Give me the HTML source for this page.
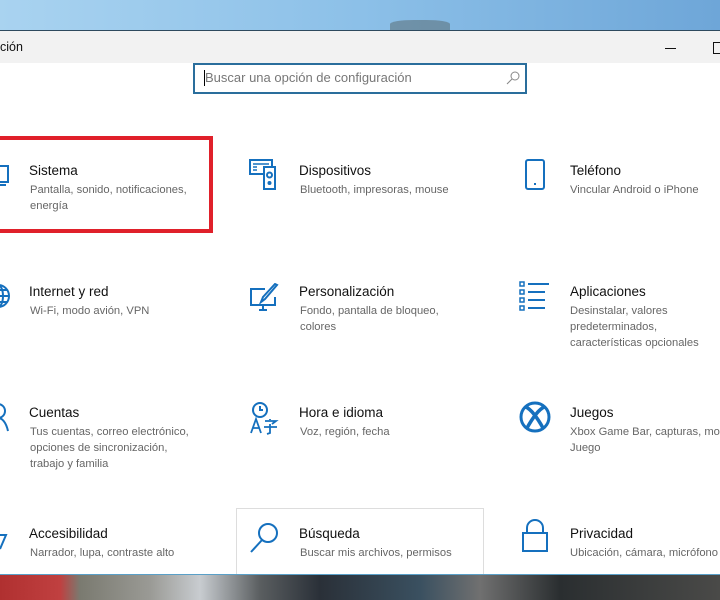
<!DOCTYPE html><html><head><meta charset="utf-8"><style>
body{margin:0;width:720px;height:600px;overflow:hidden;position:relative;font-family:"Liberation Sans",sans-serif;background:#fff}
.a{position:absolute}
.t{position:absolute;font-size:13.5px;color:#111;white-space:nowrap}
.d{position:absolute;font-size:11.2px;color:#666;line-height:16px;white-space:nowrap}
svg{position:absolute;fill:none;stroke:#1570be;stroke-width:2}
</style></head><body>
<div class="a" style="left:0;top:0;width:720px;height:30px;background:linear-gradient(90deg,#a9d3f0,#8cc0e8 50%,#6ea6d8)"></div>
<div class="a" style="left:390px;top:20px;width:60px;height:10px;background:#55656a;border-radius:40% 40% 0 0;opacity:.5"></div>
<div class="a" style="left:0;top:30px;width:720px;height:1px;background:#2e4a5e"></div>
<div class="a" style="left:0;top:31px;width:720px;height:32px;background:#f2f2f2"></div>
<div class="a" style="left:0;top:40px;font-size:12.5px;color:#111">ción</div>
<div class="a" style="left:665px;top:48px;width:11px;height:1px;background:#111"></div>
<div class="a" style="left:713px;top:42px;width:10px;height:10px;border:1px solid #111"></div>
<div class="a" style="left:193px;top:63px;width:330px;height:27px;border:2px solid #2a6e9c;background:#fff"></div>
<div class="a" style="left:204px;top:70px;width:1px;height:16px;background:#000"></div>
<div class="a" style="left:205px;top:70px;font-size:13px;color:#777">Buscar una opción de configuración</div>
<svg style="left:505px;top:70px" width="16" height="16" viewBox="0 0 16 16"><circle cx="10" cy="6" r="4" stroke="#888" stroke-width="1"/><path d="M7 9L2 14" stroke="#888" stroke-width="1"/></svg>
<div class="a" style="left:-4px;top:136px;width:209px;height:89px;border:4px solid #e0202a"></div>
<div class="a" style="left:236px;top:508px;width:246px;height:66px;border:1px solid #ddd;border-bottom:none"></div>
<div class="a" style="left:0;top:574px;width:720px;height:26px;background:linear-gradient(90deg,#b03030 0,#c04040 60px,#7a7a70 80px,#9a9a95 150px,#c8ccd0 200px,#5a5e60 260px,#2a3038 320px,#3a5060 420px,#707070 480px,#2a2e30 560px,#4a4a48 720px)"></div>
<div class="a" style="left:0;top:574px;width:720px;height:1px;background:#5aa0c8"></div>

<svg style="left:-8px;top:160px" width="22" height="30" viewBox="0 0 22 30"><rect x="2" y="6" width="14" height="16"/><path d="M0 25H14"/></svg>
<div class="t" style="left:29px;top:163px">Sistema</div>
<div class="d" style="left:30px;top:182px">Pantalla, sonido, notificaciones,<br>energía</div>

<svg style="left:249px;top:159px" width="30" height="32" viewBox="0 0 30 32"><rect x="1" y="1" width="22" height="14"/><path d="M4 5h16M4 8h4M4 11h4" stroke-width="1.5"/><rect x="15" y="8" width="11" height="22" fill="#fff"/><circle cx="20.5" cy="16" r="2.5"/><circle cx="20.5" cy="24" r="1"/></svg>
<div class="t" style="left:299px;top:163px">Dispositivos</div>
<div class="d" style="left:300px;top:182px">Bluetooth, impresoras, mouse</div>

<svg style="left:524px;top:159px" width="22" height="32" viewBox="0 0 22 32"><rect x="2" y="1" width="18" height="29" rx="2"/><path d="M10 25h2"/></svg>
<div class="t" style="left:570px;top:163px">Teléfono</div>
<div class="d" style="left:570px;top:182px">Vincular Android o iPhone</div>

<svg style="left:-10px;top:282px" width="24" height="30" viewBox="0 0 24 30"><circle cx="8" cy="14" r="11"/><ellipse cx="8" cy="14" rx="5" ry="11"/><path d="M-3 14H19M-1 8H17M-1 20H17"/></svg>
<div class="t" style="left:29px;top:284px">Internet y red</div>
<div class="d" style="left:30px;top:303px">Wi-Fi, modo avión, VPN</div>

<svg style="left:249px;top:283px" width="32" height="30" viewBox="0 0 32 30"><path d="M16 6H2V22H26V14"/><path d="M10 27H18M14 22V27"/><path d="M28 2L16 16 12 19 14 14 26 1Z"/></svg>
<div class="t" style="left:299px;top:284px">Personalización</div>
<div class="d" style="left:300px;top:303px">Fondo, pantalla de bloqueo,<br>colores</div>

<svg style="left:519px;top:281px" width="32" height="30" viewBox="0 0 32 30"><rect x="1" y="1" width="4" height="4" stroke-width="1.5"/><rect x="1" y="9" width="4" height="4" stroke-width="1.5"/><rect x="1" y="17" width="4" height="4" stroke-width="1.5"/><rect x="1" y="25" width="4" height="4" stroke-width="1.5"/><path d="M9 3H30M9 11H26M9 19H26M9 27H26"/></svg>
<div class="t" style="left:570px;top:284px">Aplicaciones</div>
<div class="d" style="left:570px;top:303px">Desinstalar, valores<br>predeterminados,<br>características opcionales</div>

<svg style="left:-10px;top:402px" width="24" height="30" viewBox="0 0 24 30"><circle cx="8" cy="9" r="7"/><path d="M-2 29C0 20 4 16 8 16S16 20 18 29"/></svg>
<div class="t" style="left:29px;top:405px">Cuentas</div>
<div class="d" style="left:30px;top:424px">Tus cuentas, correo electrónico,<br>opciones de sincronización,<br>trabajo y familia</div>

<svg style="left:249px;top:401px" width="32" height="34" viewBox="0 0 32 34"><circle cx="11" cy="9" r="7"/><path d="M11 5V9H14"/><path d="M2 32L7 18 12 32M4 27H10" stroke-width="1.8"/><path d="M16 20H27L23 23M21 18V19M15 26H28M21 23V32L18 33" stroke-width="1.8"/></svg>
<div class="t" style="left:299px;top:405px">Hora e idioma</div>
<div class="d" style="left:300px;top:424px">Voz, región, fecha</div>

<svg style="left:519px;top:401px" width="32" height="32" viewBox="0 0 32 32"><circle cx="16" cy="16" r="14" stroke-width="3"/><path d="M7 6C13 9 19 18 24 27M25 6C19 9 13 18 8 27" stroke-width="3.5"/></svg>
<div class="t" style="left:570px;top:405px">Juegos</div>
<div class="d" style="left:570px;top:424px">Xbox Game Bar, capturas, modo<br>Juego</div>

<svg style="left:-8px;top:525px" width="20" height="30" viewBox="0 0 20 30"><path d="M0 10H14L8 24" /></svg>
<div class="t" style="left:29px;top:526px">Accesibilidad</div>
<div class="d" style="left:30px;top:545px">Narrador, lupa, contraste alto</div>

<svg style="left:249px;top:521px" width="32" height="34" viewBox="0 0 32 34"><circle cx="19" cy="12" r="9"/><path d="M13 19L2 31"/></svg>
<div class="t" style="left:299px;top:526px">Búsqueda</div>
<div class="d" style="left:300px;top:545px">Buscar mis archivos, permisos</div>

<svg style="left:521px;top:519px" width="28" height="36" viewBox="0 0 28 36"><path d="M6 14V9A8 8 0 0 1 22 9V14"/><rect x="2" y="14" width="24" height="18"/></svg>
<div class="t" style="left:570px;top:526px">Privacidad</div>
<div class="d" style="left:570px;top:545px">Ubicación, cámara, micrófono</div>
</body></html>
